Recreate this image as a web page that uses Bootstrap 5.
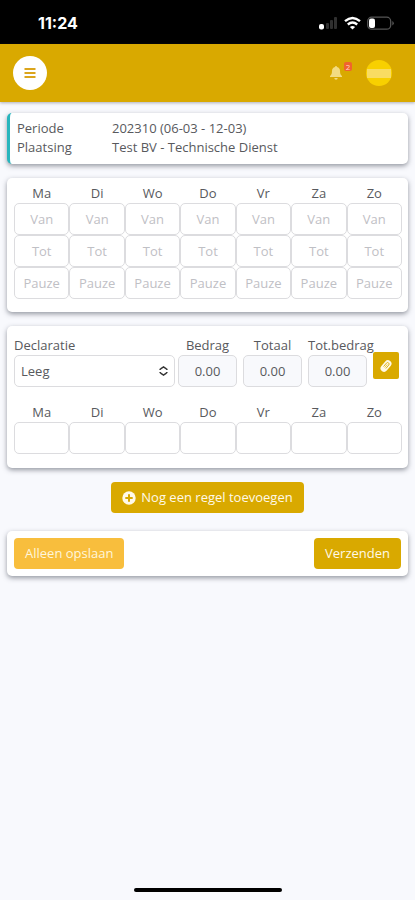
<!DOCTYPE html>
<html lang="nl">
<head>
<meta charset="utf-8">
<meta name="viewport" content="width=device-width, initial-scale=1">
<title>Urenregistratie</title>
<link href="https://cdn.jsdelivr.net/npm/bootstrap@5.3.0/dist/css/bootstrap.min.css" rel="stylesheet">
<style>
body{font-family:"Open Sans","Noto Sans",sans-serif;font-size:13px;line-height:19px;color:#58595d;background:#f8f9fd}
.status-bar{height:44px;background:#000;color:#fff;padding:2px 21px 0 38px;font:700 16px/20px Inter,sans-serif}
.top-bar{height:58px;background:#d9a900;padding:0 23px 0 13px;box-shadow:0 1px 3px rgba(60,60,80,.4)}
.menu-btn{width:34px;height:34px;background:#fff;color:#dba51c}
.bell-count{top:-4px;left:14px;width:8px;height:9px;background:#f0642d;color:#ffd9c4;font-size:8px;line-height:9px;border-radius:2px}
.avatar-btn{width:26px;height:26px;background:#f8d000}
.avatar-btn span{width:24px;height:9px;background:#f9dc62}
.page{padding:11px 7px 0;gap:14px}
.panel{background:#fff;border:0;border-radius:5px;box-shadow:0 2px 5px rgba(50,55,70,.5);padding:7px}
.panel-info{border-left:3px solid #27b5bd;padding:6px 7px 7px}
.panel-info dt{width:95px}
.panel-hours{padding:6px 6px 13px 7px}
.panel-claim{padding:10px 6px 14px 7px}
.days{table-layout:fixed;border-collapse:collapse}
.days th{padding:0;height:19px;font-weight:400;text-align:center}
.days td{padding:0}
.field{display:block;width:100%;height:32px;border:1px solid #dcdcdf;border-radius:5px;background:#fff;color:#58595d;padding:0;text-align:center;font-size:13px}
.field::placeholder{color:#bfc0c5;opacity:1}
.field[readonly]{background:#f8f9fc}
.pick{appearance:none;text-align:left;padding:0 6px}
.claim-row{gap:6px;padding-right:3px}
.claim-kind{gap:3px}
.amount{width:59px}
.claim-label{display:block;white-space:nowrap;text-align:center}
.pick-arrows{right:7px;top:11px;pointer-events:none}
.gold,.gold:hover{background:#d9a900;color:#fff9e8}
.amber,.amber:hover{background:#f8be3d;color:#fff6dc}
.act{height:31px;font-size:13px;line-height:19px;padding:0 11px;border:0;border-radius:4px}
.add-btn{gap:5px}
.clip-btn{width:26px;height:27px;border-radius:2px}
.home-line{width:148px;height:4px;background:#000;border-radius:2px}
</style>
<script src="https://cdn.jsdelivr.net/npm/bootstrap@5.3.0/dist/js/bootstrap.bundle.min.js"></script>
</head>
<body class="d-flex flex-column min-vh-100">
<div class="status-bar d-flex align-items-center justify-content-between">
  <span>11:24</span>
  <svg width="75" height="16" viewBox="0 0 75 16" aria-hidden="true">
    <rect x="0" y="9" width="5" height="5.500" rx="2" fill="#fff"/>
    <g fill="#303030"><rect x="7" y="8" width="3" height="6" rx="1"/><rect x="11" y="5" width="3" height="9" rx="1"/><rect x="15" y="2" width="3" height="12" rx="1"/></g>
    <g fill="none" stroke="#fff" stroke-width="2.400"><path d="M26 6.200q7.500-6.600 15 0"/><path d="M28.800 9.500q4.700-4 9.400 0"/></g>
    <path d="M33.500 14.500 30.900 11.900q2.600-2 5.200 0z" fill="#fff"/>
    <rect x="48.700" y="2.200" width="23" height="12" rx="4" fill="none" stroke="#555" stroke-width="1.300"/>
    <rect x="50" y="3.500" width="6" height="9.500" rx="2" fill="#fff"/>
    <path d="M73.300 6v4.500q1.500-.6 1.500-2.200t-1.500-2.300z" fill="#555"/>
  </svg>
</div>
<header class="top-bar d-flex align-items-center justify-content-between">
  <button type="button" class="menu-btn btn rounded-circle border-0 p-0 d-flex align-items-center justify-content-center" aria-label="Menu">
    <svg width="12" height="12" viewBox="0 0 12 12"><path d="M.5 2h11M.5 6h11M.5 10h11" stroke="currentColor" stroke-width="2"/></svg>
  </button>
  <div class="d-flex align-items-center gap-4">
    <button type="button" class="btn border-0 p-0 position-relative d-flex" aria-label="Meldingen">
      <svg width="12" height="14" viewBox="0 0 12 14"><path d="M6 0a1 1 0 0 1 1 1c2 .5 3 2 3 4 0 3 .8 3.800 2 5v1H0v-1c1.200-1.200 2-2 2-5 0-2 1-3.500 3-4a1 1 0 0 1 1-1zM4.300 12h3.400a1.700 1.700 0 0 1-3.400 0z" fill="#f3dc82"/></svg>
      <span class="bell-count position-absolute text-center">2</span>
    </button>
    <button type="button" class="avatar-btn btn border-0 rounded-circle p-0 d-flex align-items-center justify-content-center" aria-label="Profiel"><span></span></button>
  </div>
</header>
<main class="page d-flex flex-column">
  <section class="panel panel-info">
    <dl class="m-0">
      <div class="d-flex"><dt class="fw-normal">Periode</dt><dd class="m-0">202310 (06-03 - 12-03)</dd></div>
      <div class="d-flex"><dt class="fw-normal">Plaatsing</dt><dd class="m-0">Test BV - Technische Dienst</dd></div>
    </dl>
  </section>
  <section class="panel panel-hours">
    <table class="days w-100">
      <thead><tr><th>Ma</th><th>Di</th><th>Wo</th><th>Do</th><th>Vr</th><th>Za</th><th>Zo</th></tr></thead>
      <tbody>
        <tr>
          <td><input class="field" placeholder="Van" aria-label="Ma van"></td><td><input class="field" placeholder="Van" aria-label="Di van"></td><td><input class="field" placeholder="Van" aria-label="Wo van"></td><td><input class="field" placeholder="Van" aria-label="Do van"></td><td><input class="field" placeholder="Van" aria-label="Vr van"></td><td><input class="field" placeholder="Van" aria-label="Za van"></td><td><input class="field" placeholder="Van" aria-label="Zo van"></td>
        </tr>
        <tr>
          <td><input class="field" placeholder="Tot" aria-label="Ma tot"></td><td><input class="field" placeholder="Tot" aria-label="Di tot"></td><td><input class="field" placeholder="Tot" aria-label="Wo tot"></td><td><input class="field" placeholder="Tot" aria-label="Do tot"></td><td><input class="field" placeholder="Tot" aria-label="Vr tot"></td><td><input class="field" placeholder="Tot" aria-label="Za tot"></td><td><input class="field" placeholder="Tot" aria-label="Zo tot"></td>
        </tr>
        <tr>
          <td><input class="field" placeholder="Pauze" aria-label="Ma pauze"></td><td><input class="field" placeholder="Pauze" aria-label="Di pauze"></td><td><input class="field" placeholder="Pauze" aria-label="Wo pauze"></td><td><input class="field" placeholder="Pauze" aria-label="Do pauze"></td><td><input class="field" placeholder="Pauze" aria-label="Vr pauze"></td><td><input class="field" placeholder="Pauze" aria-label="Za pauze"></td><td><input class="field" placeholder="Pauze" aria-label="Zo pauze"></td>
        </tr>
      </tbody>
    </table>
  </section>
  <section class="panel panel-claim">
    <div class="claim-row d-flex mb-3">
      <div class="claim-kind d-flex flex-grow-1">
        <div class="flex-grow-1">
          <label for="claim" class="d-block">Declaratie</label>
          <div class="position-relative">
            <select id="claim" class="field pick"><option>Leeg</option></select>
            <svg class="pick-arrows position-absolute" width="9" height="10" viewBox="0 0 9 10" aria-hidden="true"><path d="M1 4q0-.8 1-1.300L4.500 1 7 2.700Q8 3.200 8 4M1 6q0 .8 1 1.300L4.500 9 7 7.300Q8 6.800 8 6" fill="none" stroke="#333" stroke-width="1.500"/></svg>
          </div>
        </div>
        <div class="amount"><label for="bedrag" class="claim-label">Bedrag</label><input id="bedrag" class="field" value="0.00" readonly></div>
      </div>
      <div class="amount"><label for="totaal" class="claim-label">Totaal</label><input id="totaal" class="field" value="0.00" readonly></div>
      <div class="amount"><label for="totbedrag" class="claim-label">Tot.bedrag</label><input id="totbedrag" class="field" value="0.00" readonly></div>
      <button type="button" class="btn gold clip-btn border-0 p-0 mt-3 d-flex align-items-center justify-content-center" aria-label="Bijlage">
        <svg width="14" height="14" viewBox="0 0 14 14"><g transform="rotate(40 7 7)"><rect x="3.500" y=".5" width="7" height="13" rx="3.500" fill="#fff9e8"/><path d="M5.500 9V4.500a1.500 1.500 0 0 1 3 0V9" fill="none" stroke="#d9a900" stroke-width=".8"/><path d="M7 5v4" stroke="#d9a900" stroke-width=".6"/></g></svg>
      </button>
    </div>
    <table class="days w-100">
      <thead><tr><th>Ma</th><th>Di</th><th>Wo</th><th>Do</th><th>Vr</th><th>Za</th><th>Zo</th></tr></thead>
      <tbody><tr>
        <td><input class="field" aria-label="Ma aantal"></td><td><input class="field" aria-label="Di aantal"></td><td><input class="field" aria-label="Wo aantal"></td><td><input class="field" aria-label="Do aantal"></td><td><input class="field" aria-label="Vr aantal"></td><td><input class="field" aria-label="Za aantal"></td><td><input class="field" aria-label="Zo aantal"></td>
      </tr></tbody>
    </table>
  </section>
  <button type="button" class="btn gold act add-btn d-flex align-items-center align-self-center">
    <svg width="14" height="14" viewBox="0 0 14 14" aria-hidden="true"><circle cx="7" cy="7" r="6.700" fill="#fff9e8"/><path d="M7 3.300v7.400M3.300 7h7.400" stroke="#d9a900" stroke-width="2"/></svg>
    Nog een regel toevoegen
  </button>
  <section class="panel d-flex justify-content-between mt-1">
    <button type="button" class="btn amber act">Alleen opslaan</button>
    <button type="button" class="btn gold act">Verzenden</button>
  </section>
</main>
<div class="home-line mt-auto mx-auto mb-2"></div>
</body>
</html>
